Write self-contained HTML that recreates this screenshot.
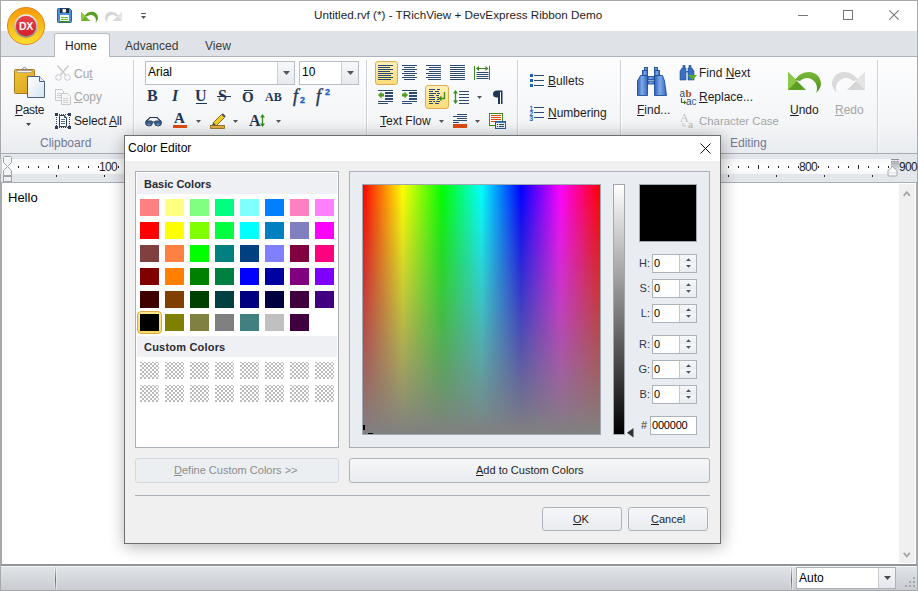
<!DOCTYPE html>
<html><head><meta charset="utf-8">
<style>
*{margin:0;padding:0;box-sizing:border-box}
html,body{width:918px;height:591px;overflow:hidden;background:#fff}
body{position:relative;font-family:"Liberation Sans",sans-serif;font-size:12px;color:#1e1e1e}
.a{position:absolute}
.t{position:absolute;white-space:pre;line-height:14px}
u{text-decoration:underline;text-decoration-thickness:1px;text-underline-offset:1px}
svg{position:absolute;overflow:visible}
.ck{width:19px;height:17px;background:conic-gradient(#fff 25%,#bbb 0 50%,#fff 0 75%,#bbb 0) 0 -1px/4px 4px}
</style></head><body>

<!-- window frame -->
<div class="a" style="left:0;top:0;width:918px;height:591px;border:1px solid #a9a9a9;border-bottom:none"></div>

<!-- title bar -->
<div class="t" style="left:314px;top:8px;font-size:11.7px;color:#1e1e1e">Untitled.rvf (*) - TRichView + DevExpress Ribbon Demo</div>
<!-- window controls -->
<div class="a" style="left:798px;top:15px;width:10px;height:1px;background:#777"></div>
<div class="a" style="left:843px;top:10px;width:10px;height:10px;border:1px solid #777"></div>
<svg style="left:889px;top:10px" width="11" height="11"><path d="M0.3 0.3L9.7 9.7M9.7 0.3L0.3 9.7" stroke="#777" stroke-width="1.1"/></svg>

<!-- tab band -->
<div class="a" style="left:1px;top:31px;width:916px;height:26px;background:#dfe3e8;border-bottom:1px solid #aeb4bb"></div>
<div class="a" style="left:54px;top:33px;width:56px;height:24px;background:#fff;border:1px solid #b6bcc3;border-bottom:none;border-radius:3px 3px 0 0"></div>
<div class="t" style="left:65px;top:39px;color:#1e1e1e">Home</div>
<div class="t" style="left:125px;top:39px;color:#3c3c3c">Advanced</div>
<div class="t" style="left:205px;top:39px;color:#3c3c3c">View</div>

<!-- ribbon body -->
<div class="a" style="left:1px;top:57px;width:916px;height:97px;background:linear-gradient(#fdfdfe,#f3f5f7 70%,#e9ecef);border-bottom:1px solid #a7adb4"></div>

<!-- group separators -->
<div class="a" style="left:133px;top:60px;width:1px;height:93px;background:#cfd3d9;box-shadow:1px 0 0 rgba(255,255,255,0.8)"></div>
<div class="a" style="left:366px;top:60px;width:1px;height:93px;background:#cfd3d9;box-shadow:1px 0 0 rgba(255,255,255,0.8)"></div>
<div class="a" style="left:517px;top:60px;width:1px;height:93px;background:#cfd3d9;box-shadow:1px 0 0 rgba(255,255,255,0.8)"></div>
<div class="a" style="left:620px;top:60px;width:1px;height:93px;background:#cfd3d9;box-shadow:1px 0 0 rgba(255,255,255,0.8)"></div>
<div class="a" style="left:877px;top:60px;width:1px;height:93px;background:#cfd3d9;box-shadow:1px 0 0 rgba(255,255,255,0.8)"></div>
<div class="t" style="left:40px;top:136px;color:#737996">Clipboard</div>
<div class="t" style="left:730px;top:136px;color:#737996">Editing</div>

<!-- ruler -->
<div class="a" style="left:1px;top:154px;width:916px;height:29px;background:#e3e6ea;border-bottom:1px solid #a9aeb4"></div>
<div class="a" style="left:1px;top:159px;width:890px;height:15px;background:linear-gradient(#f6f7f8,#fff 50%,#f6f7f8)"></div>

<!-- document -->
<div class="a" style="left:1px;top:183px;width:898px;height:381px;background:#fff"></div>
<div class="t" style="left:8px;top:191px;font-size:13px;color:#000">Hello</div>
<div class="a" style="left:1px;top:183px;width:1px;height:381px;background:#a4a7ae"></div>
<div class="a" style="left:916px;top:183px;width:1px;height:381px;background:#a4a7ae"></div>
<!-- scrollbar -->
<div class="a" style="left:899px;top:184px;width:16px;height:379px;background:#f0f0f0"></div>
<svg style="left:903px;top:190px" width="8" height="7"><path d="M0.7 5.8L3.75 2.2L6.8 5.8" stroke="#a6a6a6" stroke-width="1.8" fill="none"/></svg>
<svg style="left:903px;top:552px" width="8" height="7"><path d="M0.7 0.8L3.75 4.4L6.8 0.8" stroke="#a6a6a6" stroke-width="1.8" fill="none"/></svg>

<!-- status bar -->
<div class="a" style="left:0;top:564px;width:918px;height:27px;background:linear-gradient(#e3e6ea,#c8ccd1)"></div>
<div class="a" style="left:0;top:564px;width:918px;height:2px;background:#91969c"></div>
<div class="a" style="left:0;top:566px;width:918px;height:1px;background:#f3f4f6"></div>
<div class="a" style="left:0;top:590px;width:918px;height:1px;background:#a3a7ac"></div>
<div class="a" style="left:0;top:564px;width:1px;height:27px;background:#a9a9a9"></div>
<div class="a" style="left:917px;top:564px;width:1px;height:27px;background:#a9a9a9"></div>
<div class="a" style="left:54px;top:567px;width:3px;height:23px;background:linear-gradient(90deg,rgba(255,255,255,0.5),rgba(255,255,255,0) 33%,rgba(255,255,255,0) 66%,rgba(255,255,255,0.8))"></div>
<div class="a" style="left:55px;top:567px;width:1px;height:23px;background:linear-gradient(rgba(120,120,120,0.15),#6a6d72 55%,rgba(120,120,120,0.3))"></div>
<div class="a" style="left:790px;top:567px;width:3px;height:23px;background:linear-gradient(90deg,rgba(255,255,255,0.5),rgba(255,255,255,0) 33%,rgba(255,255,255,0) 66%,rgba(255,255,255,0.8))"></div>
<div class="a" style="left:791px;top:567px;width:1px;height:23px;background:linear-gradient(rgba(120,120,120,0.15),#6a6d72 55%,rgba(120,120,120,0.3))"></div>
<div class="a" style="left:796px;top:567px;width:100px;height:22px;background:#fff;border:1px solid #abb0b7"></div>
<div class="a" style="left:878px;top:568px;width:17px;height:20px;background:linear-gradient(#f5f6f8,#e5e8ec);border-left:1px solid #c7ccd2"></div>
<svg style="left:884px;top:576px" width="8" height="4"><path d="M0 0H7L3.5 4Z" fill="#4a4a4a"/></svg>
<svg style="left:905px;top:577px" width="11" height="11" fill="#a4a9af"><rect x="8" y="0" width="2" height="2"/><rect x="4" y="4" width="2" height="2"/><rect x="8" y="4" width="2" height="2"/><rect x="0" y="8" width="2" height="2"/><rect x="4" y="8" width="2" height="2"/><rect x="8" y="8" width="2" height="2"/></svg>
<div class="t" style="left:799px;top:571px;color:#000">Auto</div>


<!-- RIBBON CONTENT -->
<!-- clipboard -->
<div class="t" style="left:15px;top:103px;color:#1e1e1e;letter-spacing:-0.3px"><u>P</u>aste</div>
<svg style="left:26px;top:123px" width="5" height="3"><path d="M0 0H5L2.5 3Z" fill="#444"/></svg>
<div class="t" style="left:74px;top:67px;color:#a6a6a6">Cu<u>t</u></div>
<div class="t" style="left:74px;top:90px;color:#a6a6a6"><u>C</u>opy</div>
<div class="t" style="left:74px;top:114px;color:#1e1e1e;letter-spacing:-0.15px">Select <u>A</u>ll</div>

<!-- font -->
<div class="a" style="left:145px;top:61px;width:150px;height:24px;background:#fff;border:1px solid #b9bfc7"></div>
<div class="a" style="left:277px;top:62px;width:17px;height:22px;background:linear-gradient(#f7f8fa,#e6e9ed);border-left:1px solid #cdd2d8"></div>
<svg style="left:283px;top:71px" width="7" height="4"><path d="M0 0H7L3.5 4Z" fill="#555"/></svg>
<div class="t" style="left:148px;top:65px;color:#000">Arial</div>
<div class="a" style="left:299px;top:61px;width:60px;height:24px;background:#fff;border:1px solid #b9bfc7"></div>
<div class="a" style="left:341px;top:62px;width:17px;height:22px;background:linear-gradient(#f7f8fa,#e6e9ed);border-left:1px solid #cdd2d8"></div>
<svg style="left:347px;top:71px" width="7" height="4"><path d="M0 0H7L3.5 4Z" fill="#555"/></svg>
<div class="t" style="left:302px;top:65px;color:#000">10</div>

<!-- paragraph -->
<div class="t" style="left:380px;top:114px;color:#1e1e1e"><u>T</u>ext Flow</div>
<svg style="left:439px;top:120px" width="5" height="3"><path d="M0 0H5L2.5 3Z" fill="#555"/></svg>
<!-- bullets -->
<div class="t" style="left:548px;top:74px;color:#1e1e1e"><u>B</u>ullets</div>
<div class="t" style="left:548px;top:106px;color:#1e1e1e"><u>N</u>umbering</div>
<!-- editing -->
<div class="t" style="left:637px;top:103px;color:#1e1e1e"><u>F</u>ind...</div>
<div class="t" style="left:699px;top:66px;color:#1e1e1e">Find <u>N</u>ext</div>
<div class="t" style="left:699px;top:90px;color:#1e1e1e"><u>R</u>eplace...</div>
<div class="t" style="left:699px;top:114px;color:#a6a6a6;font-size:11.4px">Character Case</div>
<div class="t" style="left:790px;top:103px;color:#1e1e1e"><u>U</u>ndo</div>
<div class="t" style="left:835px;top:103px;color:#a6a6a6"><u>R</u>edo</div>

<!-- ruler content -->
<div class="a" style="left:18px;top:166px;width:1px;height:2px;background:#222"></div>
<div class="a" style="left:28px;top:166px;width:1px;height:2px;background:#222"></div>
<div class="a" style="left:38px;top:166px;width:1px;height:2px;background:#222"></div>
<div class="a" style="left:48px;top:166px;width:1px;height:2px;background:#222"></div>
<div class="a" style="left:58px;top:165px;width:1px;height:4px;background:#222"></div>
<div class="a" style="left:68px;top:166px;width:1px;height:2px;background:#222"></div>
<div class="a" style="left:78px;top:166px;width:1px;height:2px;background:#222"></div>
<div class="a" style="left:88px;top:166px;width:1px;height:2px;background:#222"></div>
<div class="a" style="left:98px;top:166px;width:1px;height:2px;background:#222"></div>
<div class="a" style="left:118px;top:166px;width:1px;height:2px;background:#222"></div>
<div class="a" style="left:128px;top:166px;width:1px;height:2px;background:#222"></div>
<div class="a" style="left:138px;top:166px;width:1px;height:2px;background:#222"></div>
<div class="a" style="left:148px;top:166px;width:1px;height:2px;background:#222"></div>
<div class="a" style="left:158px;top:165px;width:1px;height:4px;background:#222"></div>
<div class="a" style="left:168px;top:166px;width:1px;height:2px;background:#222"></div>
<div class="a" style="left:178px;top:166px;width:1px;height:2px;background:#222"></div>
<div class="a" style="left:188px;top:166px;width:1px;height:2px;background:#222"></div>
<div class="a" style="left:198px;top:166px;width:1px;height:2px;background:#222"></div>
<div class="a" style="left:218px;top:166px;width:1px;height:2px;background:#222"></div>
<div class="a" style="left:228px;top:166px;width:1px;height:2px;background:#222"></div>
<div class="a" style="left:238px;top:166px;width:1px;height:2px;background:#222"></div>
<div class="a" style="left:248px;top:166px;width:1px;height:2px;background:#222"></div>
<div class="a" style="left:258px;top:165px;width:1px;height:4px;background:#222"></div>
<div class="a" style="left:268px;top:166px;width:1px;height:2px;background:#222"></div>
<div class="a" style="left:278px;top:166px;width:1px;height:2px;background:#222"></div>
<div class="a" style="left:288px;top:166px;width:1px;height:2px;background:#222"></div>
<div class="a" style="left:298px;top:166px;width:1px;height:2px;background:#222"></div>
<div class="a" style="left:318px;top:166px;width:1px;height:2px;background:#222"></div>
<div class="a" style="left:328px;top:166px;width:1px;height:2px;background:#222"></div>
<div class="a" style="left:338px;top:166px;width:1px;height:2px;background:#222"></div>
<div class="a" style="left:348px;top:166px;width:1px;height:2px;background:#222"></div>
<div class="a" style="left:358px;top:165px;width:1px;height:4px;background:#222"></div>
<div class="a" style="left:368px;top:166px;width:1px;height:2px;background:#222"></div>
<div class="a" style="left:378px;top:166px;width:1px;height:2px;background:#222"></div>
<div class="a" style="left:388px;top:166px;width:1px;height:2px;background:#222"></div>
<div class="a" style="left:398px;top:166px;width:1px;height:2px;background:#222"></div>
<div class="a" style="left:418px;top:166px;width:1px;height:2px;background:#222"></div>
<div class="a" style="left:428px;top:166px;width:1px;height:2px;background:#222"></div>
<div class="a" style="left:438px;top:166px;width:1px;height:2px;background:#222"></div>
<div class="a" style="left:448px;top:166px;width:1px;height:2px;background:#222"></div>
<div class="a" style="left:458px;top:165px;width:1px;height:4px;background:#222"></div>
<div class="a" style="left:468px;top:166px;width:1px;height:2px;background:#222"></div>
<div class="a" style="left:478px;top:166px;width:1px;height:2px;background:#222"></div>
<div class="a" style="left:488px;top:166px;width:1px;height:2px;background:#222"></div>
<div class="a" style="left:498px;top:166px;width:1px;height:2px;background:#222"></div>
<div class="a" style="left:518px;top:166px;width:1px;height:2px;background:#222"></div>
<div class="a" style="left:528px;top:166px;width:1px;height:2px;background:#222"></div>
<div class="a" style="left:538px;top:166px;width:1px;height:2px;background:#222"></div>
<div class="a" style="left:548px;top:166px;width:1px;height:2px;background:#222"></div>
<div class="a" style="left:558px;top:165px;width:1px;height:4px;background:#222"></div>
<div class="a" style="left:568px;top:166px;width:1px;height:2px;background:#222"></div>
<div class="a" style="left:578px;top:166px;width:1px;height:2px;background:#222"></div>
<div class="a" style="left:588px;top:166px;width:1px;height:2px;background:#222"></div>
<div class="a" style="left:598px;top:166px;width:1px;height:2px;background:#222"></div>
<div class="a" style="left:618px;top:166px;width:1px;height:2px;background:#222"></div>
<div class="a" style="left:628px;top:166px;width:1px;height:2px;background:#222"></div>
<div class="a" style="left:638px;top:166px;width:1px;height:2px;background:#222"></div>
<div class="a" style="left:648px;top:166px;width:1px;height:2px;background:#222"></div>
<div class="a" style="left:658px;top:165px;width:1px;height:4px;background:#222"></div>
<div class="a" style="left:668px;top:166px;width:1px;height:2px;background:#222"></div>
<div class="a" style="left:678px;top:166px;width:1px;height:2px;background:#222"></div>
<div class="a" style="left:688px;top:166px;width:1px;height:2px;background:#222"></div>
<div class="a" style="left:698px;top:166px;width:1px;height:2px;background:#222"></div>
<div class="a" style="left:718px;top:166px;width:1px;height:2px;background:#222"></div>
<div class="a" style="left:728px;top:166px;width:1px;height:2px;background:#222"></div>
<div class="a" style="left:738px;top:166px;width:1px;height:2px;background:#222"></div>
<div class="a" style="left:748px;top:166px;width:1px;height:2px;background:#222"></div>
<div class="a" style="left:758px;top:165px;width:1px;height:4px;background:#222"></div>
<div class="a" style="left:768px;top:166px;width:1px;height:2px;background:#222"></div>
<div class="a" style="left:778px;top:166px;width:1px;height:2px;background:#222"></div>
<div class="a" style="left:788px;top:166px;width:1px;height:2px;background:#222"></div>
<div class="a" style="left:798px;top:166px;width:1px;height:2px;background:#222"></div>
<div class="a" style="left:818px;top:166px;width:1px;height:2px;background:#222"></div>
<div class="a" style="left:828px;top:166px;width:1px;height:2px;background:#222"></div>
<div class="a" style="left:838px;top:166px;width:1px;height:2px;background:#222"></div>
<div class="a" style="left:848px;top:166px;width:1px;height:2px;background:#222"></div>
<div class="a" style="left:858px;top:165px;width:1px;height:4px;background:#222"></div>
<div class="a" style="left:868px;top:166px;width:1px;height:2px;background:#222"></div>
<div class="a" style="left:878px;top:166px;width:1px;height:2px;background:#222"></div>
<div class="a" style="left:888px;top:166px;width:1px;height:2px;background:#222"></div>
<div class="a" style="left:898px;top:166px;width:1px;height:2px;background:#222"></div>
<div class="t" style="left:88px;top:160px;width:40px;text-align:center;font-size:12px;letter-spacing:-0.6px;color:#1e1e1e">100</div>
<div class="t" style="left:188px;top:160px;width:40px;text-align:center;font-size:12px;letter-spacing:-0.6px;color:#1e1e1e">200</div>
<div class="t" style="left:288px;top:160px;width:40px;text-align:center;font-size:12px;letter-spacing:-0.6px;color:#1e1e1e">300</div>
<div class="t" style="left:388px;top:160px;width:40px;text-align:center;font-size:12px;letter-spacing:-0.6px;color:#1e1e1e">400</div>
<div class="t" style="left:488px;top:160px;width:40px;text-align:center;font-size:12px;letter-spacing:-0.6px;color:#1e1e1e">500</div>
<div class="t" style="left:588px;top:160px;width:40px;text-align:center;font-size:12px;letter-spacing:-0.6px;color:#1e1e1e">600</div>
<div class="t" style="left:688px;top:160px;width:40px;text-align:center;font-size:12px;letter-spacing:-0.6px;color:#1e1e1e">700</div>
<div class="t" style="left:788px;top:160px;width:40px;text-align:center;font-size:12px;letter-spacing:-0.6px;color:#1e1e1e">800</div>
<div class="t" style="left:888px;top:160px;width:40px;text-align:center;font-size:12px;letter-spacing:-0.6px;color:#1e1e1e">900</div>
<div class="a" style="left:56px;top:175px;width:1px;height:2px;background:#222"></div>
<div class="a" style="left:104px;top:175px;width:1px;height:2px;background:#222"></div>
<div class="a" style="left:152px;top:175px;width:1px;height:2px;background:#222"></div>
<div class="a" style="left:200px;top:175px;width:1px;height:2px;background:#222"></div>
<div class="a" style="left:248px;top:175px;width:1px;height:2px;background:#222"></div>
<div class="a" style="left:296px;top:175px;width:1px;height:2px;background:#222"></div>
<div class="a" style="left:344px;top:175px;width:1px;height:2px;background:#222"></div>
<div class="a" style="left:392px;top:175px;width:1px;height:2px;background:#222"></div>
<div class="a" style="left:440px;top:175px;width:1px;height:2px;background:#222"></div>
<div class="a" style="left:488px;top:175px;width:1px;height:2px;background:#222"></div>
<div class="a" style="left:536px;top:175px;width:1px;height:2px;background:#222"></div>
<div class="a" style="left:584px;top:175px;width:1px;height:2px;background:#222"></div>
<div class="a" style="left:632px;top:175px;width:1px;height:2px;background:#222"></div>
<div class="a" style="left:680px;top:175px;width:1px;height:2px;background:#222"></div>
<div class="a" style="left:728px;top:175px;width:1px;height:2px;background:#222"></div>
<div class="a" style="left:776px;top:175px;width:1px;height:2px;background:#222"></div>
<div class="a" style="left:824px;top:175px;width:1px;height:2px;background:#222"></div>
<div class="a" style="left:872px;top:175px;width:1px;height:2px;background:#222"></div>
<svg style="left:0px;top:156px" width="14" height="28">
 <rect x="0" y="3" width="2" height="15" fill="#c9cdd2"/>
 <path d="M3.5 1.5Q3.5 0.5 4.5 0.5H10.5Q11.5 0.5 11.5 1.5V6.5L7.5 10.5L3.5 6.5Z" fill="#f4f5f6" stroke="#9ea3a9"/>
 <path d="M7.5 10.5L11.5 14.5V19.5H3.5V14.5Z" fill="#f4f5f6" stroke="#9ea3a9"/>
 <rect x="3.5" y="20.5" width="8" height="5" fill="#eef0f2" stroke="#9ea3a9"/>
</svg>
<div class="a" style="left:891px;top:159px;width:8px;height:1px;background:#8d9096"></div>
<div class="a" style="left:891px;top:161px;width:8px;height:8px;background:linear-gradient(#a9adb2,#d4d7db)"></div>
<svg style="left:887px;top:166px" width="12" height="11">
 <path d="M5.5 0.5L10 4.5V9Q10 10 9 10H2Q1 10 1 9V4.5Z" fill="#f8f9fa" stroke="#a3a8ae"/>
 <path d="M2 7H9" stroke="#dfe2e5"/>
</svg>


<!-- ICONS -->
<!-- QAT save -->
<svg style="left:57px;top:8px" width="15" height="15">
 <path d="M0.5 1.5Q0.5 0.5 1.5 0.5H12.5L14.5 2.5V13.5Q14.5 14.5 13.5 14.5H1.5Q0.5 14.5 0.5 13.5Z" fill="#4b8fdc" stroke="#2b5fa6"/>
 <rect x="3" y="0.5" width="9" height="4.5" fill="#1d2a3a"/>
 <rect x="5.5" y="1" width="3.5" height="3.5" fill="#f2f4f6"/>
 <rect x="3" y="7" width="9" height="7" fill="#f4f8f2"/>
 <rect x="4" y="9" width="7" height="1" fill="#6dbb2e"/>
 <rect x="4" y="11" width="7" height="1" fill="#6dbb2e"/>
 <rect x="3" y="13" width="9" height="1.5" fill="#3f8a1f"/>
</svg>
<!-- QAT undo -->
<svg style="left:81px;top:10px" width="17" height="14" viewBox="0 0 33 22">
 <path d="M0 1L0 19L18 19Z" fill="#6fae2b"/>
 <path d="M0 1L9 10L0 19Z" fill="#8ecb45"/>
 <path d="M7 9C10 4 15 1 21 1C28 1 33 6 33 13C33 16 31 19 28 22C30 18 29 13 26 10C22 6 16 6 12 10Z" fill="#5d9e22"/>
</svg>
<!-- QAT redo -->
<svg style="left:105px;top:10px" width="17" height="14" viewBox="0 0 33 22">
 <g transform="translate(33,0) scale(-1,1)">
 <path d="M0 1L0 19L18 19Z" fill="#d9d9d9"/>
 <path d="M0 1L9 10L0 19Z" fill="#e6e6e6"/>
 <path d="M7 9C10 4 15 1 21 1C28 1 33 6 33 13C33 16 31 19 28 22C30 18 29 13 26 10C22 6 16 6 12 10Z" fill="#d6d6d6"/>
 </g>
</svg>
<!-- QAT customize -->
<div class="a" style="left:141px;top:13px;width:5px;height:1px;background:#50545a"></div>
<svg style="left:141px;top:16px" width="5" height="3"><path d="M0 0H5L2.5 3Z" fill="#50545a"/></svg>

<!-- Paste -->
<svg style="left:14px;top:66px" width="31" height="32">
 <defs><linearGradient id="cbg" x1="0" y1="0" x2="1" y2="1"><stop offset="0" stop-color="#f0c53a"/><stop offset="1" stop-color="#d9a21c"/></linearGradient>
 <linearGradient id="pgg" x1="0" y1="0" x2="1" y2="1"><stop offset="0" stop-color="#ffffff"/><stop offset="1" stop-color="#d4e4f2"/></linearGradient></defs>
 <rect x="0.5" y="3.5" width="20" height="24" rx="1" fill="url(#cbg)" stroke="#a87a1a"/>
 <rect x="3" y="4.5" width="15" height="2" fill="#f4f4f4" stroke="#8a8a8a" stroke-width="0.6"/>
 <path d="M8.5 4.5V2.5Q10.5 0 12.5 2.5V4.5" fill="none" stroke="#8a8a8a"/>
 <path d="M13.5 10.5H25.5L30.5 15.5V31.5H13.5Z" fill="url(#pgg)" stroke="#4d6180"/>
 <path d="M25.5 10.5V15.5H30.5" fill="#e8eef4" stroke="#4d6180"/>
</svg>
<!-- Cut -->
<svg style="left:55px;top:65px" width="16" height="16">
 <path d="M2.5 0.5L10.5 10M13.5 0.5L5.5 10" stroke="#c9c9c9" stroke-width="1.3" fill="none"/>
 <circle cx="3.5" cy="12.5" r="2.8" fill="none" stroke="#c9c9c9" stroke-width="1"/>
 <circle cx="12.5" cy="12.5" r="2.8" fill="none" stroke="#c9c9c9" stroke-width="1"/>
</svg>
<!-- Copy -->
<svg style="left:55px;top:89px" width="16" height="16">
 <path d="M0.5 0.5H6.5L8.5 2.5V11.5H0.5Z" fill="#f7f7f7" stroke="#cacaca"/>
 <path d="M6.5 4.5H12.5L15.5 7.5V15.5H6.5Z" fill="#f7f7f7" stroke="#cacaca"/>
 <path d="M2 4.5H6M2 6.5H6M2 8.5H6M8 9.5H13.5M8 11.5H13.5M8 13.5H13.5" stroke="#cfcfcf"/>
</svg>
<!-- Select all -->
<svg style="left:55px;top:113px" width="16" height="16">
 <g fill="#2d3e55"><rect x="4" y="1" width="1" height="1"/><rect x="4" y="14" width="1" height="1"/><rect x="1" y="4" width="1" height="1"/><rect x="14" y="4" width="1" height="1"/><rect x="6" y="1" width="1" height="1"/><rect x="6" y="14" width="1" height="1"/><rect x="1" y="6" width="1" height="1"/><rect x="14" y="6" width="1" height="1"/><rect x="8" y="1" width="1" height="1"/><rect x="8" y="14" width="1" height="1"/><rect x="1" y="8" width="1" height="1"/><rect x="14" y="8" width="1" height="1"/><rect x="10" y="1" width="1" height="1"/><rect x="10" y="14" width="1" height="1"/><rect x="1" y="10" width="1" height="1"/><rect x="14" y="10" width="1" height="1"/><rect x="12" y="1" width="1" height="1"/><rect x="12" y="14" width="1" height="1"/><rect x="1" y="12" width="1" height="1"/><rect x="14" y="12" width="1" height="1"/>
 <rect x="0" y="0" width="3" height="3"/><rect x="13" y="0" width="3" height="3"/>
 <rect x="0" y="13" width="3" height="3"/><rect x="13" y="13" width="3" height="3"/></g>
 <path d="M4.5 2.5H9.5L11.5 4.5V13.5H4.5Z" fill="#fff" stroke="#2d3e55"/>
 <path d="M9.5 2.5V4.5H11.5" fill="#dde6f0" stroke="#2d3e55"/>
 <g fill="#4a78ad"><rect x="6" y="6" width="4" height="1"/><rect x="6" y="8" width="4" height="1"/><rect x="6" y="10" width="4" height="1"/></g>
</svg>

<!-- Font style glyphs -->
<div class="t" style="left:147px;top:88px;font-family:'Liberation Serif',serif;font-weight:bold;font-size:16px;line-height:16px;color:#1f3553">B</div>
<div class="t" style="left:172px;top:88px;font-family:'Liberation Serif',serif;font-style:italic;font-weight:bold;font-size:16px;line-height:16px;color:#1f3553">I</div>
<div class="t" style="left:195px;top:88px;font-family:'Liberation Serif',serif;font-weight:bold;font-size:16px;line-height:16px;color:#1f3553">U</div>
<div class="a" style="left:196px;top:103px;width:11px;height:1px;background:#1f3553"></div>
<div class="t" style="left:218px;top:88px;font-family:'Liberation Serif',serif;font-weight:bold;font-size:16px;line-height:16px;color:#1f3553">S</div>
<div class="a" style="left:217px;top:96px;width:14px;height:1px;background:#1f3553"></div>
<div class="t" style="left:242px;top:89px;font-family:'Liberation Serif',serif;font-weight:bold;font-size:15px;line-height:16px;color:#1f3553">O</div>
<div class="a" style="left:244px;top:90px;width:9px;height:1px;background:#1f3553"></div>
<div class="t" style="left:265px;top:90px;font-family:'Liberation Serif',serif;font-weight:bold;font-size:12px;line-height:14px;color:#1f3553">AB</div>
<div class="t" style="left:293px;top:88px;font-family:'Liberation Serif',serif;font-style:italic;font-size:18px;line-height:17px;color:#1f3553;-webkit-text-stroke:0.4px #1f3553">f</div>
<div class="t" style="left:300px;top:95px;font-family:'Liberation Sans',sans-serif;font-weight:bold;font-size:9px;line-height:10px;color:#1a62c8;-webkit-text-stroke:0.3px #1a62c8">2</div>
<div class="t" style="left:316px;top:88px;font-family:'Liberation Serif',serif;font-style:italic;font-size:18px;line-height:17px;color:#1f3553;-webkit-text-stroke:0.4px #1f3553">f</div>
<div class="t" style="left:325px;top:87px;font-family:'Liberation Sans',sans-serif;font-weight:bold;font-size:9px;line-height:10px;color:#1a62c8;-webkit-text-stroke:0.3px #1a62c8">2</div>

<!-- glasses -->
<svg style="left:145px;top:116px" width="17" height="11">
 <path d="M1 5.5L5 1.5H12L16 5.5" stroke="#1f3553" fill="none" stroke-width="1.1"/>
 <path d="M0.5 6.5Q0.5 5 2 5H6.5Q7.5 5 7.5 6.5Q7.5 10 4 10Q0.5 10 0.5 6.5Z" fill="#3d6396" stroke="#1f3553" stroke-width="0.9"/>
 <path d="M9.5 6.5Q9.5 5 11 5H15.5Q16.5 5 16.5 6.5Q16.5 10 13 10Q9.5 10 9.5 6.5Z" fill="#3d6396" stroke="#1f3553" stroke-width="0.9"/>
 <path d="M7.5 6H9.5" stroke="#1f3553" stroke-width="1.1"/>
 <path d="M2.5 8.5Q4 9.5 5.5 8.5M11.5 8.5Q13 9.5 14.5 8.5" stroke="#9fb9dc" stroke-width="0.8" fill="none"/>
</svg>
<!-- font color -->
<div class="t" style="left:174px;top:111px;font-family:'Liberation Serif',serif;font-weight:bold;font-size:15px;line-height:14px;color:#1f3553">A</div>
<div class="a" style="left:173px;top:125px;width:14px;height:3px;background:#df4a12"></div>
<svg style="left:196px;top:120px" width="5" height="3"><path d="M0 0H5L2.5 3Z" fill="#555"/></svg>
<!-- highlight -->
<svg style="left:210px;top:113px" width="16" height="16">
 <path d="M3.2 9.8L11.5 1.5L14.5 4.5L6.2 12.8Z" fill="#f5cc1f" stroke="#6b5210" stroke-width="0.8"/>
 <path d="M11.5 1.5L12.8 0.2L15.8 3.2L14.5 4.5Z" fill="#555" />
 <path d="M3.2 9.8L2 12.5L6.2 12.8Z" fill="#444"/>
 <rect x="0.5" y="12.5" width="14" height="3" fill="#dfae45" stroke="#8a6420" stroke-width="0.8"/>
</svg>
<svg style="left:233px;top:120px" width="5" height="3"><path d="M0 0H5L2.5 3Z" fill="#555"/></svg>
<!-- grow font -->
<div class="t" style="left:249px;top:113px;font-family:'Liberation Serif',serif;font-weight:bold;font-size:16px;line-height:16px;color:#1f3553">A</div>
<svg style="left:260px;top:114px" width="5" height="13"><path d="M2.5 1V12" stroke="#3f8a1f" stroke-width="1.3"/><path d="M0 3.5L2.5 0L5 3.5ZM0 9.5L2.5 13L5 9.5Z" fill="#3f8a1f"/></svg>
<svg style="left:276px;top:120px" width="5" height="3"><path d="M0 0H5L2.5 3Z" fill="#555"/></svg>

<!-- paragraph icons -->
<div class="a" style="left:375px;top:61px;width:23px;height:24px;border:1px solid #dcae4f;border-radius:3px;background:linear-gradient(#fff0b8,#fddc7a)"></div>
<div class="a" style="left:425px;top:85px;width:24px;height:24px;border:1px solid #dcae4f;border-radius:3px;background:linear-gradient(#fff0b8,#fddc7a)"></div>
<svg style="left:378px;top:65px" width="20" height="18"><rect x="0" y="0" width="15" height="1" fill="#2c4a6e"/><rect x="0" y="2" width="12" height="1" fill="#2c4a6e"/><rect x="0" y="4" width="15" height="1" fill="#2c4a6e"/><rect x="0" y="6" width="12" height="1" fill="#2c4a6e"/><rect x="0" y="8" width="15" height="1" fill="#2c4a6e"/><rect x="0" y="10" width="13" height="1" fill="#2c4a6e"/><rect x="0" y="12" width="15" height="1" fill="#2c4a6e"/><rect x="0" y="14" width="13" height="1" fill="#2c4a6e"/></svg>
<svg style="left:402px;top:65px" width="20" height="18"><rect x="0" y="0" width="15" height="1" fill="#2c4a6e"/><rect x="2" y="2" width="11" height="1" fill="#2c4a6e"/><rect x="0" y="4" width="15" height="1" fill="#2c4a6e"/><rect x="2" y="6" width="11" height="1" fill="#2c4a6e"/><rect x="0" y="8" width="15" height="1" fill="#2c4a6e"/><rect x="2" y="10" width="11" height="1" fill="#2c4a6e"/><rect x="0" y="12" width="15" height="1" fill="#2c4a6e"/><rect x="2" y="14" width="11" height="1" fill="#2c4a6e"/></svg>
<svg style="left:426px;top:65px" width="20" height="18"><rect x="0" y="0" width="15" height="1" fill="#2c4a6e"/><rect x="3" y="2" width="12" height="1" fill="#2c4a6e"/><rect x="0" y="4" width="15" height="1" fill="#2c4a6e"/><rect x="3" y="6" width="12" height="1" fill="#2c4a6e"/><rect x="0" y="8" width="15" height="1" fill="#2c4a6e"/><rect x="2" y="10" width="13" height="1" fill="#2c4a6e"/><rect x="0" y="12" width="15" height="1" fill="#2c4a6e"/><rect x="2" y="14" width="13" height="1" fill="#2c4a6e"/></svg>
<svg style="left:450px;top:65px" width="20" height="18"><rect x="0" y="0" width="15" height="1" fill="#2c4a6e"/><rect x="0" y="2" width="15" height="1" fill="#2c4a6e"/><rect x="0" y="4" width="15" height="1" fill="#2c4a6e"/><rect x="0" y="6" width="15" height="1" fill="#2c4a6e"/><rect x="0" y="8" width="15" height="1" fill="#2c4a6e"/><rect x="0" y="10" width="15" height="1" fill="#2c4a6e"/><rect x="0" y="12" width="15" height="1" fill="#2c4a6e"/><rect x="0" y="14" width="15" height="1" fill="#2c4a6e"/></svg>
<svg style="left:474px;top:65px" width="17" height="16">
 <rect x="0" y="1" width="1" height="14" fill="#3f8a1f"/><rect x="15" y="1" width="1" height="14" fill="#3f8a1f"/>
 <path d="M2.5 3.5H14" stroke="#3f8a1f" stroke-width="1"/><path d="M2 3.5L5 1V6ZM14.5 3.5L11.5 1V6Z" fill="#3f8a1f"/>
 <rect x="2.5" y="7" width="12" height="1" fill="#2c4a6e"/><rect x="2.5" y="9" width="12" height="1" fill="#2c4a6e"/><rect x="2.5" y="11" width="12" height="1" fill="#2c4a6e"/><rect x="2.5" y="13" width="12" height="1" fill="#2c4a6e"/>
</svg>
<!-- decrease indent -->
<svg style="left:378px;top:90px" width="16" height="15">
 <rect x="0" y="0" width="15" height="1" fill="#2c4a6e"/>
 <rect x="7" y="2" width="8" height="2" fill="#2c4a6e"/><rect x="7" y="5" width="8" height="2" fill="#2c4a6e"/><rect x="7" y="8" width="8" height="2" fill="#2c4a6e"/>
 <path d="M0 5L3.5 1.5V3.5H6V6.5H3.5V8.5Z" fill="#4f9a22"/>
 <rect x="0" y="11" width="15" height="1" fill="#2c4a6e"/><rect x="0" y="13" width="10" height="1" fill="#2c4a6e"/>
</svg>
<!-- increase indent -->
<svg style="left:402px;top:90px" width="16" height="15">
 <rect x="0" y="0" width="15" height="1" fill="#2c4a6e"/>
 <rect x="7" y="2" width="8" height="2" fill="#2c4a6e"/><rect x="7" y="5" width="8" height="2" fill="#2c4a6e"/><rect x="7" y="8" width="8" height="2" fill="#2c4a6e"/>
 <path d="M6 5L2.5 1.5V3.5H0V6.5H2.5V8.5Z" fill="#4f9a22"/>
 <rect x="0" y="11" width="15" height="1" fill="#2c4a6e"/><rect x="0" y="13" width="10" height="1" fill="#2c4a6e"/>
</svg>
<!-- wrap -->
<svg style="left:429px;top:88px" width="17" height="17">
 <g fill="#2c4a6e">
 <rect x="0" y="1" width="6" height="1"/><rect x="8" y="1" width="3" height="1"/>
 <rect x="0" y="3" width="4" height="1"/><rect x="6" y="3" width="4" height="1"/>
 <rect x="0" y="5" width="7" height="1"/><rect x="8" y="5" width="3" height="1"/>
 <rect x="0" y="7" width="5" height="1"/><rect x="7" y="7" width="3" height="1"/>
 <rect x="0" y="9" width="6" height="1"/><rect x="8" y="9" width="2" height="1"/>
 <rect x="0" y="11" width="6" height="1"/><rect x="8" y="11" width="2" height="1"/>
 <rect x="0" y="13" width="3" height="1"/><rect x="4" y="13" width="2" height="1"/><rect x="7" y="13" width="4" height="1"/>
 <rect x="0" y="15" width="4" height="1"/><rect x="6" y="15" width="4" height="1"/>
 </g>
 <path d="M15.5 4V10.5H12" stroke="#3f8a1f" stroke-width="1.3" fill="none"/><path d="M12.5 7.5L9.5 10.5L12.5 13.5Z" fill="#3f8a1f"/>
</svg>
<!-- line spacing -->
<svg style="left:453px;top:90px" width="16" height="14">
 <path d="M2.5 1.5V12.5" stroke="#3f8a1f" stroke-width="1.3"/><path d="M0 3.5L2.5 0L5 3.5ZM0 10.5L2.5 14L5 10.5Z" fill="#3f8a1f"/>
 <g fill="#2c4a6e"><rect x="6" y="1" width="10" height="1"/><rect x="6" y="4" width="10" height="1"/><rect x="6" y="7" width="10" height="1"/><rect x="6" y="10" width="10" height="1"/><rect x="6" y="13" width="10" height="1"/></g>
</svg>
<svg style="left:477px;top:96px" width="5" height="3"><path d="M0 0H5L2.5 3Z" fill="#555"/></svg>
<!-- pilcrow -->
<svg style="left:493px;top:90px" width="10" height="14">
 <path d="M9 0.5H4Q0 0.5 0 4Q0 7.5 4 7.5H5V14H7V2H8V14H9.5V0.5Z" fill="#1f3553"/>
</svg>
<!-- border/shading -->
<svg style="left:453px;top:113px" width="15" height="16">
 <g fill="#2c4a6e"><rect x="4" y="1" width="10" height="1"/><rect x="0" y="3" width="14" height="1"/><rect x="4" y="5" width="10" height="1"/><rect x="0" y="7" width="14" height="1"/><rect x="0" y="9" width="6" height="1"/></g>
 <rect x="0" y="11" width="14" height="4" fill="#df4a12"/>
</svg>
<svg style="left:475px;top:120px" width="5" height="3"><path d="M0 0H5L2.5 3Z" fill="#555"/></svg>
<!-- paragraph dialog -->
<svg style="left:489px;top:113px" width="17" height="16">
 <rect x="0.5" y="0.5" width="13" height="12" fill="#fff" stroke="#3f8a1f"/>
 <g fill="#df4a12"><rect x="2" y="2" width="10" height="1"/><rect x="2" y="4" width="10" height="1"/><rect x="2" y="6" width="10" height="1"/><rect x="2" y="8" width="4" height="1"/></g>
 <rect x="6.5" y="8.5" width="10" height="7" fill="#e9f1fa" stroke="#2c5a8e"/>
 <rect x="7" y="9" width="9" height="1" fill="#4a86c8"/>
 <g fill="#2c4a6e"><rect x="8" y="11" width="1" height="1"/><rect x="10" y="11" width="5" height="1"/><rect x="8" y="13" width="1" height="1"/><rect x="10" y="13" width="5" height="1"/></g>
</svg>

<!-- bullets -->
<svg style="left:530px;top:74px" width="15" height="13">
 <g fill="#1f5fbf"><rect x="0" y="0" width="3" height="3"/><rect x="0" y="5" width="3" height="3"/><rect x="0" y="10" width="3" height="3"/></g>
 <g fill="#2c4a6e"><rect x="4" y="1" width="10" height="1"/><rect x="4" y="6" width="10" height="1"/><rect x="4" y="11" width="10" height="1"/></g>
</svg>
<svg style="left:530px;top:106px" width="15" height="14">
 <g fill="#1f5fbf" font-family="Liberation Sans" font-weight="bold" font-size="6.5"><text x="-0.5" y="5">1</text><text x="-0.5" y="10">2</text><text x="-0.5" y="14.5">3</text></g>
 <g fill="#2c4a6e"><rect x="4" y="1" width="10" height="1"/><rect x="4" y="6" width="10" height="1"/><rect x="4" y="11" width="10" height="1"/></g>
</svg>

<!-- binoculars -->
<svg style="left:637px;top:67px" width="31" height="30">
 <defs><linearGradient id="bng" x1="0" y1="0" x2="1" y2="0"><stop offset="0" stop-color="#2d5fb5"/><stop offset="0.45" stop-color="#7fa9e8"/><stop offset="1" stop-color="#3467bd"/></linearGradient></defs>
 <g fill="url(#bng)" stroke="#1f4e9c" stroke-width="0.9">
 <rect x="7.5" y="0.5" width="3" height="3"/><rect x="17.5" y="0.5" width="3" height="3"/>
 <rect x="5.5" y="3.5" width="5" height="5"/><rect x="17.5" y="3.5" width="5" height="5"/>
 <path d="M3.5 8.5H10.5V28.5H0.5V14Z"/><path d="M17.5 8.5H25.5L27.5 14L29.5 28.5H17.5Z"/>
 <rect x="10.5" y="9.5" width="7" height="3"/><rect x="10.5" y="14" width="7" height="3"/>
 </g>
</svg>
<!-- find next -->
<svg style="left:680px;top:65px" width="17" height="17">
 <g fill="#3a6fc0" stroke="#244e94" stroke-width="0.6">
 <rect x="3" y="0.5" width="2" height="3"/><rect x="9" y="0.5" width="2" height="3"/>
 <path d="M2 3H6V15H0V6Z"/><path d="M8 3H12L14 6V15H8Z"/>
 </g>
 <rect x="6" y="6" width="2" height="1.5" fill="#3a6fc0"/>
 <path d="M8 10H17L12.5 15Z" fill="#4fae2a"/>
</svg>
<!-- replace -->
<svg style="left:680px;top:88px" width="17" height="18">
 <text x="-0.5" y="9" font-family="Liberation Sans" font-size="10" fill="#2c4a6e">a</text>
 <text x="5.5" y="9" font-family="Liberation Serif" font-weight="bold" font-size="11" fill="#b3441a">b</text>
 <path d="M1.5 10V14.5H5" stroke="#3f7a1f" stroke-width="1.2" fill="none"/><path d="M4 12.5L6.5 14.5L4 16.5Z" fill="#3f7a1f"/>
 <text x="6" y="17" font-family="Liberation Sans" font-size="10" fill="#2c4a6e">a</text>
 <text x="11.5" y="17" font-family="Liberation Sans" font-size="10" fill="#2a62b8">c</text>
</svg>
<!-- character case -->
<svg style="left:680px;top:111px" width="17" height="18">
 <text x="0" y="11" font-family="Liberation Serif" font-size="12" fill="#c2c2c2">A</text>
 <path d="M3 12V15H6" stroke="#c8c8c8" fill="none"/>
 <text x="8" y="17" font-family="Liberation Serif" font-weight="bold" font-size="10" fill="#c2c2c2">a</text>
</svg>

<!-- large undo / redo -->
<svg style="left:788px;top:71px" width="33" height="22" viewBox="0 0 33 22">
 <defs><linearGradient id="ug" x1="0" y1="0" x2="0" y2="1"><stop offset="0" stop-color="#79b93a"/><stop offset="1" stop-color="#4f8e1d"/></linearGradient></defs>
 <path d="M0 1L0 19L18 19Z" fill="#5f9f25"/>
 <path d="M0 1L9 10L0 19Z" fill="#8cc94a"/>
 <path d="M7 9C10 4 15 1 21 1C28 1 33 6 33 13C33 16 31 19 28 22C30 18 29 13 26 10C22 6 16 6 12 10Z" fill="url(#ug)"/>
</svg>
<svg style="left:832px;top:71px" width="33" height="22" viewBox="0 0 33 22">
 <g transform="translate(33,0) scale(-1,1)">
 <path d="M0 1L0 19L18 19Z" fill="#d6d6d6"/>
 <path d="M0 1L9 10L0 19Z" fill="#e4e4e4"/>
 <path d="M7 9C10 4 15 1 21 1C28 1 33 6 33 13C33 16 31 19 28 22C30 18 29 13 26 10C22 6 16 6 12 10Z" fill="#dadada"/>
 </g>
</svg>

<!-- DIALOG -->
<div class="a" style="left:124px;top:135px;width:597px;height:409px;background:#f0f0f0;border:1px solid #6f6f6f;box-shadow:1px 2px 16px rgba(0,0,0,0.32)"></div>
<div class="a" style="left:125px;top:136px;width:595px;height:25px;background:#fff"></div>
<div class="t" style="left:128px;top:141px;color:#000">Color Editor</div>
<svg style="left:700px;top:143px" width="11" height="11"><path d="M0.5 0.5L10.5 10.5M10.5 0.5L0.5 10.5" stroke="#111" stroke-width="1"/></svg>

<!-- left group -->
<div class="a" style="left:135px;top:171px;width:204px;height:277px;background:#fff;border:1px solid #a9b0b9"></div>
<div class="a" style="left:137px;top:173px;width:200px;height:21px;background:#eff0f3"></div>
<div class="t" style="left:144px;top:177px;font-size:11px;font-weight:bold;color:#2b2b33">Basic Colors</div>
<div class="a" style="left:137px;top:336px;width:200px;height:21px;background:#eff0f3"></div>
<div class="t" style="left:144px;top:340px;font-size:11px;font-weight:bold;color:#2b2b33;letter-spacing:0.2px">Custom Colors</div>
<div class="a" style="left:140px;top:199px;width:19px;height:17px;background:#FF8080"></div>
<div class="a" style="left:165px;top:199px;width:19px;height:17px;background:#FFFF80"></div>
<div class="a" style="left:190px;top:199px;width:19px;height:17px;background:#80FF80"></div>
<div class="a" style="left:215px;top:199px;width:19px;height:17px;background:#00FF80"></div>
<div class="a" style="left:240px;top:199px;width:19px;height:17px;background:#80FFFF"></div>
<div class="a" style="left:265px;top:199px;width:19px;height:17px;background:#0080FF"></div>
<div class="a" style="left:290px;top:199px;width:19px;height:17px;background:#FF80C0"></div>
<div class="a" style="left:315px;top:199px;width:19px;height:17px;background:#FF80FF"></div>
<div class="a" style="left:140px;top:222px;width:19px;height:17px;background:#FF0000"></div>
<div class="a" style="left:165px;top:222px;width:19px;height:17px;background:#FFFF00"></div>
<div class="a" style="left:190px;top:222px;width:19px;height:17px;background:#80FF00"></div>
<div class="a" style="left:215px;top:222px;width:19px;height:17px;background:#00FF40"></div>
<div class="a" style="left:240px;top:222px;width:19px;height:17px;background:#00FFFF"></div>
<div class="a" style="left:265px;top:222px;width:19px;height:17px;background:#0080C0"></div>
<div class="a" style="left:290px;top:222px;width:19px;height:17px;background:#8080C0"></div>
<div class="a" style="left:315px;top:222px;width:19px;height:17px;background:#FF00FF"></div>
<div class="a" style="left:140px;top:245px;width:19px;height:17px;background:#804040"></div>
<div class="a" style="left:165px;top:245px;width:19px;height:17px;background:#FF8040"></div>
<div class="a" style="left:190px;top:245px;width:19px;height:17px;background:#00FF00"></div>
<div class="a" style="left:215px;top:245px;width:19px;height:17px;background:#008080"></div>
<div class="a" style="left:240px;top:245px;width:19px;height:17px;background:#004080"></div>
<div class="a" style="left:265px;top:245px;width:19px;height:17px;background:#8080FF"></div>
<div class="a" style="left:290px;top:245px;width:19px;height:17px;background:#800040"></div>
<div class="a" style="left:315px;top:245px;width:19px;height:17px;background:#FF0080"></div>
<div class="a" style="left:140px;top:268px;width:19px;height:17px;background:#800000"></div>
<div class="a" style="left:165px;top:268px;width:19px;height:17px;background:#FF8000"></div>
<div class="a" style="left:190px;top:268px;width:19px;height:17px;background:#008000"></div>
<div class="a" style="left:215px;top:268px;width:19px;height:17px;background:#008040"></div>
<div class="a" style="left:240px;top:268px;width:19px;height:17px;background:#0000FF"></div>
<div class="a" style="left:265px;top:268px;width:19px;height:17px;background:#0000A0"></div>
<div class="a" style="left:290px;top:268px;width:19px;height:17px;background:#800080"></div>
<div class="a" style="left:315px;top:268px;width:19px;height:17px;background:#8000FF"></div>
<div class="a" style="left:140px;top:291px;width:19px;height:17px;background:#400000"></div>
<div class="a" style="left:165px;top:291px;width:19px;height:17px;background:#804000"></div>
<div class="a" style="left:190px;top:291px;width:19px;height:17px;background:#004000"></div>
<div class="a" style="left:215px;top:291px;width:19px;height:17px;background:#004040"></div>
<div class="a" style="left:240px;top:291px;width:19px;height:17px;background:#000080"></div>
<div class="a" style="left:265px;top:291px;width:19px;height:17px;background:#000040"></div>
<div class="a" style="left:290px;top:291px;width:19px;height:17px;background:#400040"></div>
<div class="a" style="left:315px;top:291px;width:19px;height:17px;background:#400080"></div>
<div class="a" style="left:140px;top:314px;width:19px;height:17px;background:#000000"></div>
<div class="a" style="left:165px;top:314px;width:19px;height:17px;background:#808000"></div>
<div class="a" style="left:190px;top:314px;width:19px;height:17px;background:#808040"></div>
<div class="a" style="left:215px;top:314px;width:19px;height:17px;background:#808080"></div>
<div class="a" style="left:240px;top:314px;width:19px;height:17px;background:#408080"></div>
<div class="a" style="left:265px;top:314px;width:19px;height:17px;background:#C0C0C0"></div>
<div class="a" style="left:290px;top:314px;width:19px;height:17px;background:#400040"></div>
<div class="a" style="left:315px;top:314px;width:19px;height:17px;background:#FFFFFF"></div>
<div class="a" style="left:137px;top:311px;width:25px;height:23px;border:1px solid #d9a940;border-radius:4px;background:linear-gradient(#fde88c,#fbd862)"></div>
<div class="a" style="left:140px;top:314px;width:19px;height:17px;background:#000"></div>
<div class="a ck" style="left:140px;top:362px"></div>
<div class="a ck" style="left:165px;top:362px"></div>
<div class="a ck" style="left:190px;top:362px"></div>
<div class="a ck" style="left:215px;top:362px"></div>
<div class="a ck" style="left:240px;top:362px"></div>
<div class="a ck" style="left:265px;top:362px"></div>
<div class="a ck" style="left:290px;top:362px"></div>
<div class="a ck" style="left:315px;top:362px"></div>
<div class="a ck" style="left:140px;top:385px"></div>
<div class="a ck" style="left:165px;top:385px"></div>
<div class="a ck" style="left:190px;top:385px"></div>
<div class="a ck" style="left:215px;top:385px"></div>
<div class="a ck" style="left:240px;top:385px"></div>
<div class="a ck" style="left:265px;top:385px"></div>
<div class="a ck" style="left:290px;top:385px"></div>
<div class="a ck" style="left:315px;top:385px"></div>

<!-- right group -->
<div class="a" style="left:349px;top:171px;width:361px;height:277px;background:#e9ecf0;border:1px solid #a9b0b9"></div>
<div class="a" style="left:362px;top:184px;width:239px;height:251px;border:1px solid #a0a8b2;background:linear-gradient(rgba(128,128,128,0),rgb(128,128,128)),linear-gradient(90deg,#f00 0%,#ff0 16.67%,#0f0 33.33%,#0ff 50%,#00f 66.67%,#f0f 83.33%,#f00 100%)"></div>
<div class="a" style="left:363px;top:425px;width:2px;height:5px;background:#000"></div>
<div class="a" style="left:368px;top:433px;width:5px;height:1px;background:#000"></div>
<div class="a" style="left:613px;top:184px;width:12px;height:251px;border:1px solid #a0a8b2;background:linear-gradient(#fff,#000)"></div>
<svg style="left:627px;top:428px" width="7" height="10"><path d="M6.5 0V9.5L0 4.75Z" fill="#333"/></svg>
<div class="a" style="left:639px;top:184px;width:58px;height:58px;border:1px solid #a0a8b2;background:#000"></div>

<div class="t" style="left:638px;top:256px;font-size:11px;color:#333a4a;width:12px;text-align:right">H:</div>
<div class="a" style="left:652px;top:254px;width:45px;height:19px;background:#fff;border:1px solid #acb3bb"></div>
<div class="a" style="left:679px;top:255px;width:17px;height:17px;background:linear-gradient(#f7f9fb,#e9ecf0 50%,#f5f7f9 50%,#e9ecf0);border-left:1px solid #c3c8cf"></div>
<svg style="left:686px;top:258px" width="5" height="10"><path d="M0 3H5L2.5 0.2Z M0 7H5L2.5 9.8Z" fill="#50545a"/></svg>
<div class="t" style="left:654px;top:256px;font-size:11px;color:#000">0</div>
<div class="t" style="left:638px;top:281px;font-size:11px;color:#333a4a;width:12px;text-align:right">S:</div>
<div class="a" style="left:652px;top:279px;width:45px;height:19px;background:#fff;border:1px solid #acb3bb"></div>
<div class="a" style="left:679px;top:280px;width:17px;height:17px;background:linear-gradient(#f7f9fb,#e9ecf0 50%,#f5f7f9 50%,#e9ecf0);border-left:1px solid #c3c8cf"></div>
<svg style="left:686px;top:283px" width="5" height="10"><path d="M0 3H5L2.5 0.2Z M0 7H5L2.5 9.8Z" fill="#50545a"/></svg>
<div class="t" style="left:654px;top:281px;font-size:11px;color:#000">0</div>
<div class="t" style="left:638px;top:306px;font-size:11px;color:#333a4a;width:12px;text-align:right">L:</div>
<div class="a" style="left:652px;top:304px;width:45px;height:19px;background:#fff;border:1px solid #acb3bb"></div>
<div class="a" style="left:679px;top:305px;width:17px;height:17px;background:linear-gradient(#f7f9fb,#e9ecf0 50%,#f5f7f9 50%,#e9ecf0);border-left:1px solid #c3c8cf"></div>
<svg style="left:686px;top:308px" width="5" height="10"><path d="M0 3H5L2.5 0.2Z M0 7H5L2.5 9.8Z" fill="#50545a"/></svg>
<div class="t" style="left:654px;top:306px;font-size:11px;color:#000">0</div>
<div class="t" style="left:638px;top:337px;font-size:11px;color:#333a4a;width:12px;text-align:right">R:</div>
<div class="a" style="left:652px;top:335px;width:45px;height:19px;background:#fff;border:1px solid #acb3bb"></div>
<div class="a" style="left:679px;top:336px;width:17px;height:17px;background:linear-gradient(#f7f9fb,#e9ecf0 50%,#f5f7f9 50%,#e9ecf0);border-left:1px solid #c3c8cf"></div>
<svg style="left:686px;top:339px" width="5" height="10"><path d="M0 3H5L2.5 0.2Z M0 7H5L2.5 9.8Z" fill="#50545a"/></svg>
<div class="t" style="left:654px;top:337px;font-size:11px;color:#000">0</div>
<div class="t" style="left:638px;top:362px;font-size:11px;color:#333a4a;width:12px;text-align:right">G:</div>
<div class="a" style="left:652px;top:360px;width:45px;height:19px;background:#fff;border:1px solid #acb3bb"></div>
<div class="a" style="left:679px;top:361px;width:17px;height:17px;background:linear-gradient(#f7f9fb,#e9ecf0 50%,#f5f7f9 50%,#e9ecf0);border-left:1px solid #c3c8cf"></div>
<svg style="left:686px;top:364px" width="5" height="10"><path d="M0 3H5L2.5 0.2Z M0 7H5L2.5 9.8Z" fill="#50545a"/></svg>
<div class="t" style="left:654px;top:362px;font-size:11px;color:#000">0</div>
<div class="t" style="left:638px;top:387px;font-size:11px;color:#333a4a;width:12px;text-align:right">B:</div>
<div class="a" style="left:652px;top:385px;width:45px;height:19px;background:#fff;border:1px solid #acb3bb"></div>
<div class="a" style="left:679px;top:386px;width:17px;height:17px;background:linear-gradient(#f7f9fb,#e9ecf0 50%,#f5f7f9 50%,#e9ecf0);border-left:1px solid #c3c8cf"></div>
<svg style="left:686px;top:389px" width="5" height="10"><path d="M0 3H5L2.5 0.2Z M0 7H5L2.5 9.8Z" fill="#50545a"/></svg>
<div class="t" style="left:654px;top:387px;font-size:11px;color:#000">0</div>
<div class="t" style="left:641px;top:418px;font-size:11px;color:#333a4a">#</div>
<div class="a" style="left:650px;top:416px;width:47px;height:19px;background:#fff;border:1px solid #acb3bb"></div>
<div class="t" style="left:652px;top:418px;font-size:11px;letter-spacing:-0.2px;color:#000">000000</div>

<!-- buttons -->
<div class="a" style="left:135px;top:458px;width:204px;height:25px;border:1px solid #d3d8de;border-radius:3px;background:#eceff2"></div>
<div class="t" style="left:174px;top:463px;font-size:11px;color:#8c8c8c"><u>D</u>efine Custom Colors &gt;&gt;</div>
<div class="a" style="left:349px;top:458px;width:361px;height:25px;border:1px solid #acb3bb;border-radius:3px;background:linear-gradient(#f6f7f9,#e8ebef)"></div>
<div class="t" style="left:476px;top:463px;font-size:11px;color:#1e1e1e"><u>A</u>dd to Custom Colors</div>
<div class="a" style="left:135px;top:495px;width:575px;height:1px;background:#aab1b9"></div>
<div class="a" style="left:542px;top:507px;width:80px;height:24px;border:1px solid #acb3bb;border-radius:3px;background:linear-gradient(#f6f7f9,#e8ebef)"></div>
<div class="t" style="left:573px;top:512px;font-size:11px;color:#1e1e1e"><u>O</u>K</div>
<div class="a" style="left:628px;top:507px;width:80px;height:24px;border:1px solid #acb3bb;border-radius:3px;background:linear-gradient(#f6f7f9,#e8ebef)"></div>
<div class="t" style="left:651px;top:512px;font-size:11px;color:#1e1e1e"><u>C</u>ancel</div>

<!-- DX logo -->
<svg style="left:7px;top:7px" width="38" height="38">
 <defs>
  <linearGradient id="og" x1="0" y1="0" x2="0" y2="1"><stop offset="0" stop-color="#f49a0c"/><stop offset="0.6" stop-color="#f9c21c"/><stop offset="1" stop-color="#fde02e"/></linearGradient>
  <linearGradient id="rg" x1="0" y1="0" x2="0" y2="1"><stop offset="0" stop-color="#f0f0f0"/><stop offset="1" stop-color="#8a8a8a"/></linearGradient>
  <linearGradient id="redg" x1="0" y1="0" x2="0" y2="1"><stop offset="0" stop-color="#e8414b"/><stop offset="1" stop-color="#d41f2b"/></linearGradient>
 </defs>
 <circle cx="19" cy="19" r="18.5" fill="url(#og)" stroke="#e8841c" stroke-width="1"/>
 <circle cx="19" cy="19" r="11.8" fill="url(#rg)"/>
 <circle cx="19" cy="19" r="10.2" fill="url(#redg)"/>
 <text x="19" y="22.8" font-family="Liberation Sans" font-weight="bold" font-size="10.5" fill="#fff" text-anchor="middle" letter-spacing="-0.3">DX</text>
</svg>

</body></html>
